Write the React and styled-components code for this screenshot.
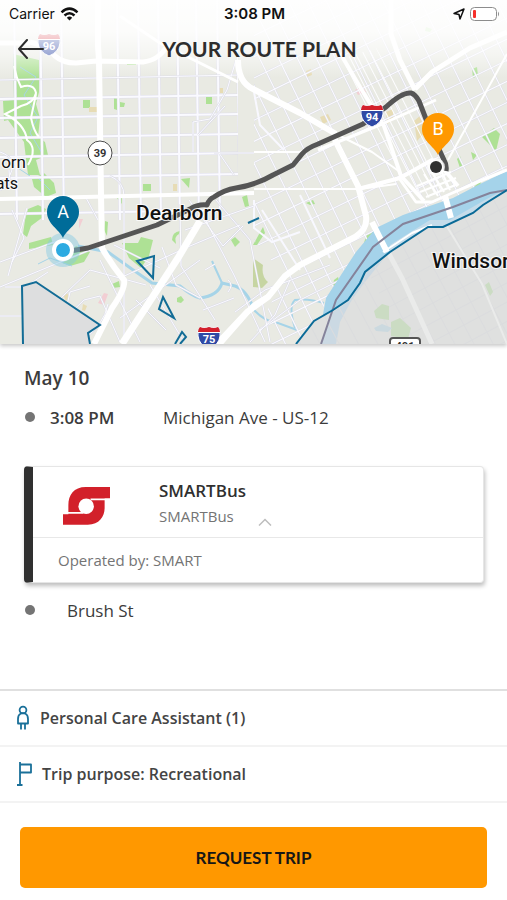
import React from "react";
import styled, { createGlobalStyle } from "styled-components";

const GlobalStyle = createGlobalStyle`
  *, *::before, *::after { box-sizing: border-box; }
  body {
    margin: 0;
    background: #ffffff;
    color: #3c3c3c;
    font-family: "Open Sans", "Noto Sans", sans-serif;
  }
  h1, h2, p, ul, ol { margin: 0; padding: 0; }
`;

const Screen = styled.div`
  display: flex;
  flex-direction: column;
  min-height: 100vh;
`;

const MapPanel = styled.header`
  display: grid;
  height: 344px;
  overflow: hidden;
  box-shadow: 0 2px 4px rgba(0, 0, 0, 0.22);
  > * { grid-area: 1 / 1; min-width: 0; }
`;

const MapDrawing = styled.svg`
  display: block;
  width: 100%;
  height: 344px;
  font-family: Roboto, sans-serif;
`;

const TopBars = styled.div`
  z-index: 1;
  align-self: start;
  height: 78px;
  background: linear-gradient(
    rgba(255, 255, 255, 0.96) 0,
    rgba(255, 255, 255, 0.86) 32px,
    rgba(255, 255, 255, 0.5) 56px,
    rgba(255, 255, 255, 0) 78px
  );
`;

const StatusBar = styled.div`
  display: grid;
  grid-template-columns: 1fr auto 1fr;
  align-items: center;
  height: 28px;
  padding: 0 7px 0 9px;
  color: #111111;
  font: 400 14px/20px Inter, sans-serif;
`;

const StatusSide = styled.div`
  display: flex;
  align-items: center;
  justify-content: ${(p) => (p.$end ? "flex-end" : "flex-start")};
  gap: 5px;
`;

const Clock = styled.span`
  font-size: 15px;
  font-weight: 600;
`;

const TitleBar = styled.div`
  display: grid;
  grid-template-columns: 40px 1fr 40px;
  align-items: center;
  height: 42px;
  padding: 0 6px;
`;

const BackButton = styled.button`
  display: grid;
  place-items: center;
  height: 40px;
  padding: 0 0 0 10px;
  border: 0;
  background: none;
  cursor: pointer;
`;

const Title = styled.h1`
  padding-left: 12px;
  color: #2d2d2d;
  font: 700 21px/28px Lato, sans-serif;
  text-align: center;
`;

const Itinerary = styled.main`
  flex: 1;
  padding: 20px 23px 24px 24px;
`;

const DateHeading = styled.h2`
  font-size: 19px;
  font-weight: 600;
  line-height: 28px;
`;

const Stop = styled.div`
  display: flex;
  align-items: center;
  height: 30px;
  font-size: 17px;
  margin-top: ${(p) => (p.$first ? 10 : 12)}px;
`;

const Dot = styled.span`
  width: 10px;
  height: 10px;
  margin-left: 1px;
  border-radius: 50%;
  background: #747474;
`;

const StopTime = styled.time`
  width: 113px;
  margin-left: 15px;
  font-weight: 600;
`;

const StopName = styled.span`
  margin-left: ${(p) => (p.$indent ? 32 : 0)}px;
`;

const LegCard = styled.section`
  margin-top: 34px;
  border: 1px solid #e6e6e6;
  border-left: 9px solid #303030;
  border-radius: 4px;
  background: #ffffff;
  box-shadow: 1px 3px 4px rgba(0, 0, 0, 0.25);
`;

const LegMain = styled.div`
  display: grid;
  grid-template-columns: 126px auto 1fr;
  height: 71px;
  padding-top: 10px;
  border-bottom: 1px solid #e8e8e8;
`;

const LegLogo = styled.div`
  padding: 10px 0 0 30px;
`;

const LegName = styled.p`
  color: #303030;
  font-size: 17px;
  font-weight: 600;
  line-height: 28px;
`;

const LegService = styled.p`
  color: #747474;
  font-size: 15px;
  font-weight: 500;
  line-height: 22px;
`;

const Collapse = styled.button`
  display: grid;
  place-items: center;
  align-self: end;
  width: 24px;
  height: 24px;
  margin: 0 0 3px 7px;
  padding: 0;
  border: 0;
  background: none;
  cursor: pointer;
`;

const LegOperator = styled.p`
  padding-left: 25px;
  color: #747474;
  font-size: 15px;
  font-weight: 500;
  line-height: 44px;
`;

const Options = styled.ul`
  border-top: 2px solid #e0e0e0;
  list-style: none;
`;

const Option = styled.li`
  display: flex;
  align-items: center;
  gap: 10px;
  height: 56px;
  padding: 0 16px;
  border-bottom: 2px solid #f3f3f3;
  color: #444444;
  font-size: 16px;
  font-weight: 600;
`;

const Actions = styled.footer`
  padding: 24px 20px 12px;
`;

const RequestButton = styled.button`
  width: 100%;
  height: 61px;
  border: 0;
  border-radius: 5px;
  background: #ff9800;
  color: #161616;
  font: 700 17px/24px Lato, sans-serif;
  cursor: pointer;
`;

/* ---------- map data ---------- */

const parks = [
  "M13 54 L39 60 L39 92 L36 104 L40 118 L38 137 L45 142 L48 155 L36 160 L40 175 L28 175 L24 142 L8 120 L4 121 L3 101 L14 100 Z",
  "M83 100h7v8h-7z", "M114 98l6 1 0 3 5 1-1 4-5 0-2 3-3-1z", "M206 96h6v8h-6z",
  "M127 62h9v3h-9z", "M32 179l12-6 10 10 2 10-10 4-12-10z",
  "M28 209l10-4 8 4-3 8-12 9-4 11-4-3 2-14z", "M29 243l22-6 2 8-24 4z",
  "M60 262l16-16 14 6-6 10-14 4z", "M122 243l16 0 3-6 12 3-4 16-8 12-12-10z",
  "M143 184h8v7h-8z", "M181 179l9-1-1 10z", "M115 196l7 0 0 8z",
  "M112 284l7-3 1 6-7 1z", "M177 298l4-2 3 4-3 3-4-1z", "M105 221l3 1-1 14-3-6z",
  "M172 240q0-8 8-9l-1 3q-5 2-3 10z", "M242 197l5-2 2 11-4 1z",
  "M231 240l4-3 5 5-5 5z", "M253 245l10-18 2 6-8 12z",
  "M306 203l7-3 2 4-5 1z", "M366 236l7-5 1 6-7 8-3-2z", "M334 280l4-3 2 7-4 3-3-2z",
  "M470 190l11-9-1 8z", "M482 137l12-9 6 6-4 17z",
  "M457 159l3-3 3 10-3 2z", "M471 152l6 3-4 5z", "M426 27l6 2-2 3-5-1z",
  "M472 69l5-2 1 9-5 2z",
];
const faintParks = [
  "M374 311l8-7 7 2 0 14-13-2z", "M391 322l9-4 11 10-3 11-17-3z", "M485 285l4-3 4 10-3 4z",
];
const ochre = [
  "M89 107h8v5h-8z", "M217 88h6v5h-6z", "M320 117l8-3 3 6-8 4z", "M386 112l7-3 0 11-6 4z",
  "M414 121l7-6 5 16-9 10z", "M306 71l5-2 1 6-5 2z", "M173 184h4v7h-4z", "M63 295l4-2 3 5-4 3z",
  "M83 304l4 2-2 5-3-1z", "M402 262l5-4 3 7-5 3z",
];
const pinks = ["M355 90l7-4 4 6-8 3z", "M98 303l6-10 4 1-4 11z", "M79 219l4 0-4 10z"];

const westVerticals = [14, 40, 61, 117, 138, 158, 177, 196, 217, 237];
const westHorizontals = [98, 117, 137, 156, 177, 213, 232];

const minorRoads = [
  "M0 80L240 75", "M0 287L58 263 90 250", "M0 262L60 240 M5 287L25 287 48 272",
  "M26 342L40 318 90 270 146 285 M0 316H26 M40 342L84 300 100 296 120 342",
  "M59 342L70 292 90 286 M8 276L27 208 M12 210L24 238 12 262",
  "M114 245L160 268 M180 204L181 266 215 320 M120 278L190 246 240 225",
  "M100 260L140 342 M150 285L184 342 M120 318L200 260 M136 300L166 330",
  "M203 215L234 275 265 342 M185 230L254 206 M216 200L250 240 270 342 M189 200l34 46 20-20",
  "M236 60L227 90 210 119 193 122 193 152 M198 135L225 106 M219 153L234 175 M214 153H254",
  "M110 176Q124 182 124 196V342 M85 196L98 220 M162 247L176 285 200 298",
  "M250 342L275 315 290 280 M235 312L265 290 330 265 M260 330L300 300 340 280",
  "M228 292Q234 285 228 280 M203 310L234 298 M205 270L215 264 M80 342Q104 326 108 304",
  "M0 152Q18 158 10 175 M0 190Q12 186 9 170",
];

const parkTrails =
  "M14 66L17 78 21 87Q34 83 36 93Q34 103 21 106L5 114Q25 124 27 140Q38 148 28 165 M36 94L31 118Q34 132 39 137";

const arterials = [
  ["M98 0L98 46 99 60 101 195 102 248Q111 264 124 280Q126 288 112 308L94 344", 6],
  ["M30 42Q48 46 55 56Q63 63 76 63L96 61 143 62Q160 60 168 44", 5],
  ["M0 43H30", 5],
  ["M0 199L254 193", 4],
  ["M254 189L360 189 396 184", 2],
  ["M200 221L178 258 122 344", 7],
  ["M238 60Q238 82 253 89L300 113 336 134", 6],
  ["M336 134L372 152 400 172", 2],
  ["M120 16L160 43 238 82", 3],
  ["M217 344L247 312 268 297 285 276 300 265 355 237Q368 229 366 216L358 186 334 138", 6],
  ["M220 344L254 305 270 295", 5],
  ["M340 53L363 92 384 126 401 176 424 201", 4],
  ["M391 0L391 34 400 60 415 90", 5],
  ["M507 32L470 48 432 72 415 89", 5],
  ["M254 152H300L338 135", 2],
  ["M318 150L382 124 436 100", 3],
  ["M507 54L448 160", 2],
  ["M372 222L387 252", 6],
  ["M445 196L451 218", 6],
  ["M399 178L416 202 432 202 450 194 480 181 507 170", 3],
  ["M358 189L400 178 432 160 446 172 458 186", 4],
];

const cityLines = Array.from({ length: 25 }, (_, i) => -170 + i * 17);
const crossLines = Array.from({ length: 25 }, (_, i) => -215 + i * 19);
const downtownLines = Array.from({ length: 9 }, (_, i) => -26 + i * 7);
const windsorLines = Array.from({ length: 18 }, (_, i) => -170 + i * 17);

const river =
  "M507 171L480 184 453 198 403 215 376 228 356 252 326 298 321 325 313 344H340L346 310 362 285 370 274 396 252 430 227 445 228 475 213 507 194Z";
const canada =
  "M296 344L314 321 333 310 348 300 360 283 365 272 390 252 428 227 443 227 473 213 483 205 507 190V344Z";
const coastLine =
  "M296 344L314 321 333 310 348 300 360 283 365 272 390 252 428 227 443 227 473 213 483 205 507 190";
const borderLine = "M321 344L336 300 373 247 403 224 453 207 490 193 507 190";
const zones = [
  "M23 344L22 286 36 282 100 325 88 333 90 344",
  "M137 261L154 256 153 278Z",
  "M163 297L174 318 159 309Z",
  "M175 344L182 332 186 337 180 344",
  "M248 223L259 218",
];
const tripLine =
  "M70 251L88 248 103 243 157 225 190 209Q198 204 207 205Q209 199 214 197Q224 190 236 188Q256 185 273 175L293 165 302 154Q307 148 318 144L363 124 386 107Q402 92 411 93Q415 94 419 101L431 132 444 160Q447 165 446 171";

function Shield({ x, y, number }) {
  return (
    <g transform={`translate(${x} ${y})`}>
      <path d="M-9 -11Q-5 -9 0 -11Q5 -9 9 -11Q12 -7 11 -2Q10 7 0 11Q-10 7 -11 -2Q-12 -7 -9 -11Z" fill="#2f49a5" stroke="#fff" strokeWidth="1" />
      <path d="M-9 -11Q-5 -9 0 -11Q5 -9 9 -11Q11 -9 11 -6H-11Q-11 -9 -9 -11Z" fill="#d3202b" />
      <path d="M-11 -5.500H11" stroke="#fff" />
      <text y="5" textAnchor="middle" fill="#fff" fontSize="11" fontWeight="700">{number}</text>
    </g>
  );
}

function Pin({ x, y, letter, color }) {
  return (
    <g transform={`translate(${x} ${y})`}>
      <path d="M0 26C-4 17 -16 12 -16 0A16 16 0 0 1 16 0C16 12 4 17 0 26Z" fill={color} />
      <text y="6" textAnchor="middle" fill="#fff" fontSize="18">{letter}</text>
    </g>
  );
}

function RouteMap() {
  return (
    <MapDrawing viewBox="0 0 507 344" preserveAspectRatio="xMidYMid slice" role="img" aria-label="Route from Dearborn to downtown Detroit">
      <defs>
        <clipPath id="west"><path d="M0 0H238V200L200 220H0Z" /></clipPath>
        <clipPath id="city"><path d="M254 0H507V171L453 198 403 215 376 228 356 252 326 298 313 344H250L285 276 254 240Z" /></clipPath>
        <clipPath id="downtown"><path d="M338 60L376 48 455 180 450 186 425 200 402 178Z" /></clipPath>
        <clipPath id="windsor"><path d={canada} /></clipPath>
      </defs>
      <rect width="507" height="344" fill="#e9eae3" />
      <g fill="#aee195">{parks.map((d) => <path key={d} d={d} />)}</g>
      <path d="M253 258L263 265Q261 276 268 282L262 288 253 287Z" fill="#c6d5a2" />
      <g fill="#e7dcb5">{ochre.map((d) => <path key={d} d={d} />)}</g>
      <g fill="#f2ced3">{pinks.map((d) => <path key={d} d={d} />)}</g>

      <g fill="none" stroke="#a6d4e8" strokeWidth="2">
        <path d="M78 246L108 252Q130 268 152 283L180 286Q192 296 200 298Q218 296 222 283L235 286Q247 290 254 310" strokeWidth="3" />
        <path d="M222 283L212 261 M254 310Q265 322 278 323L297 330 M295 328Q288 306 295 300Q308 298 324 303" />
        <path d="M20 67l16 10-12 18 14 22-8 16 12 20 M2 156l16 12 12 8 M36 176l14 14 M38 264L50 258 72 266" strokeWidth="1" />
      </g>

      <g clipPath="url(#west)" fill="none" strokeWidth="3" stroke="#dfdeeb">
        {westVerticals.map((x) => <path key={x} d={`M${x} 0L${x + 3} 220`} />)}
        {westHorizontals.map((y) => <path key={y} d={`M0 ${y + 1}L238 ${y - 3}`} />)}
      </g>
      <g clipPath="url(#west)" fill="none" strokeWidth="2" stroke="#fafaff">
        {westVerticals.map((x) => <path key={x} d={`M${x} 0L${x + 3} 220`} />)}
        {westHorizontals.map((y) => <path key={y} d={`M0 ${y + 1}L238 ${y - 3}`} />)}
      </g>

      <g clipPath="url(#city)">
        <g transform="translate(380 150) rotate(-26)" fill="none">
          <g stroke="#dedee9" strokeWidth="2">
            {crossLines.map((v) => <path key={v} d={`M-260 ${v}H260`} />)}
            {cityLines.map((v) => <path key={v} d={`M${v} -260V260`} />)}
          </g>
          <g stroke="#fcfcff" strokeWidth="1">
            {crossLines.map((v) => <path key={v} d={`M-260 ${v}H260`} />)}
            {cityLines.map((v) => <path key={v} d={`M${v} -260V260`} />)}
          </g>
        </g>
      </g>
      <g clipPath="url(#downtown)">
        <g transform="translate(390 110) rotate(-27)" fill="none" stroke="#fdfdff" strokeWidth="1">
          {downtownLines.map((v) => <path key={v} d={`M${v} -100V140`} />)}
        </g>
      </g>
      <path d="M254 92L260 125 284 150 M254 200V228L272 242 300 232 M262 210L300 270 M300 195L330 258" fill="none" stroke="#f8f8ff" strokeWidth="2" />

      <g fill="none" stroke="#dddde8" strokeWidth="2">{minorRoads.map((d) => <path key={d} d={d} />)}</g>
      <g fill="none" stroke="#fbfbff" strokeWidth="1">{minorRoads.map((d) => <path key={d} d={d} />)}</g>
      <path d={parkTrails} fill="none" stroke="#fff" strokeWidth="2" />

      <path d={river} fill="#a5d3ea" />
      <path d="M390 245L430 220 450 220 485 200 507 188V196L473 215 443 229 428 229 390 254Z" fill="#c5dcea" />
      <path d={canada} fill="#dfe0df" />
      <path d="M333 312L348 302 361 284 367 272 383 260Q360 287 350 303L340 322 336 344H321Z" fill="#cbd9e3" />
      <g clipPath="url(#windsor)">
        <g transform="translate(440 280) rotate(-28)" stroke="#dbdcde" strokeWidth="1">
          {windsorLines.map((v) => <path key={v} d={`M${v} -160V160M-60 ${v}H160`} />)}
        </g>
        <g fill="#cbdcc3">{faintParks.map((d) => <path key={d} d={d} />)}</g>
        <path d="M388 252L402 278 432 344" fill="none" stroke="#eaebea" strokeWidth="5" />
        <path d="M446 225L482 284 507 344" fill="none" stroke="#eaebea" strokeWidth="2" />
        <path d="M374 328l8-4 10 4-4 4-12-1z" fill="#cbd9df" />
      </g>

      <g fill="none" stroke="#ffffff" strokeLinejoin="round">
        {arterials.map(([d, w]) => <path key={d} d={d} strokeWidth={w} />)}
        <path d="M383 252L412 233 432 225" strokeWidth="2" />
      </g>
      <path d="M424 174l14 22m-6-24l12 20m-4-24l10 22M417 186l34-14m-31 20l36-14m-30 19l32-13" stroke="#fff" strokeWidth="2" fill="none" />

      <path d={borderLine} fill="none" stroke="#85839b" strokeWidth="2" />
      <path d={coastLine} fill="none" stroke="#0a6a97" strokeWidth="2" />
      <path d={`${zones[0]}Z`} fill="#dddedf" />
      <g fill="none" stroke="#126c96" strokeWidth="2">{zones.map((d) => <path key={d} d={d} />)}</g>

      <path d={tripLine} fill="none" stroke="#555555" strokeWidth="5" strokeLinejoin="round" />
      <Shield x={49} y={45} number="96" />
      <Shield x={372} y={116} number="94" />
      <Shield x={209} y={338} number="75" />
      <circle cx="100" cy="153" r="12" fill="#fff" stroke="#4a4a4a" />
      <text x="100" y="157" textAnchor="middle" fontSize="11" fontWeight="700" fill="#333">39</text>
      <rect x="390" y="338" width="30" height="14" rx="3" fill="#fff" stroke="#555" strokeWidth="2" />
      <text x="405" y="350" textAnchor="middle" fontSize="11" fontWeight="700" fill="#333">401</text>

      <g fill="#111" stroke="#fff" strokeWidth="2" paintOrder="stroke" strokeOpacity="0.8">
        <text x="136" y="220" fontSize="21" fontWeight="500">Dearborn</text>
        <text x="432" y="268" fontSize="21" fontWeight="500">Windsor</text>
        <text x="26" y="168" fontSize="17" textAnchor="end">orn</text>
        <text x="18" y="189" fontSize="16" textAnchor="end">ats</text>
      </g>

      <circle cx="63" cy="250" r="17" fill="#83c9e2" opacity="0.45" />
      <circle cx="63" cy="250" r="9" fill="#2caae1" stroke="#fff" strokeWidth="4" />
      <Pin x={63} y={212} letter="A" color="#006c99" />
      <circle cx="436" cy="167" r="9" fill="#fff" opacity="0.75" />
      <circle cx="436" cy="167" r="6" fill="#303030" />
      <Pin x={438} y={129} letter="B" color="#ff9800" />
    </MapDrawing>
  );
}

const WifiIcon = () => (
  <svg width="19" height="14" viewBox="0 0 19 14" fill="none" stroke="#111" strokeWidth="2.500" aria-label="Wi-Fi">
    <path d="M1.500 5.300Q9.500 -2 17.500 5.300" />
    <path d="M4.500 8.500Q9.500 4 14.500 8.500" />
    <path d="M6.800 10.700Q9.500 8.300 12.200 10.700L9.500 13.500Z" fill="#111" stroke="none" />
  </svg>
);

const LocationIcon = () => (
  <svg width="12" height="12" viewBox="0 0 12 12" fill="none" stroke="#111" strokeWidth="1.500" strokeLinejoin="round" aria-label="Location">
    <path d="M1 5.500L11 1L7 11L6 6.500Z" />
  </svg>
);

const BatteryIcon = () => (
  <svg width="30" height="14" viewBox="0 0 30 14" fill="none" aria-label="Battery low">
    <rect x="0.500" y="0.500" width="26" height="13" rx="4" fill="#fff" stroke="#8c8c8c" />
    <rect x="3" y="3" width="3" height="8" rx="1" fill="#f5302b" />
    <path d="M28 4.500Q30 7 28 9.500Z" fill="#8c8c8c" />
  </svg>
);

const BackIcon = () => (
  <svg width="28" height="20" viewBox="0 0 28 20" fill="none" stroke="#2d2d2d" strokeWidth="2" strokeLinecap="round" strokeLinejoin="round" aria-hidden="true">
    <path d="M26 10H2M10 1L2 10L10 19" />
  </svg>
);

const SmartLogo = () => (
  <svg width="47" height="38" viewBox="0 0 140 113" role="img" aria-label="SMART">
    <path d="M140 0H68C32 0 16 24 16 54V81H0V112H74C108 112 124 88 124 62V34H140Z" fill="#d2202a" />
    <circle cx="69" cy="57" r="23" fill="#fff" />
    <path d="M0 77H60M82 37H140" stroke="#fff" strokeWidth="5" />
  </svg>
);

const ChevronUp = () => (
  <svg width="14" height="8" viewBox="0 0 14 8" fill="none" stroke="#bdbdbd" strokeWidth="1.500" aria-hidden="true">
    <path d="M1 7.500L7 1.500L13 7.500" />
  </svg>
);

const PersonIcon = () => (
  <svg width="14" height="26" viewBox="0 0 14 26" fill="none" stroke="#1a7099" strokeWidth="1.800" strokeLinejoin="round" aria-hidden="true">
    <circle cx="7" cy="5" r="3.400" />
    <path d="M4.500 8.800Q2 10 2 14V18.500H12V14Q12 10 9.500 8.800Q7 7.600 4.500 8.800M5 18.500V24.500M9 18.500V24.500" />
  </svg>
);

const FlagIcon = () => (
  <svg width="16" height="24" viewBox="0 0 16 24" fill="none" stroke="#1a7099" strokeWidth="1.800" strokeLinejoin="round" aria-hidden="true">
    <path d="M4 0V23M1 23H6.500M4 2.500H15V10.500H4" />
  </svg>
);

export default function App() {
  return (
    <Screen>
      <GlobalStyle />
      <MapPanel>
        <RouteMap />
        <TopBars>
          <StatusBar>
            <StatusSide>Carrier <WifiIcon /></StatusSide>
            <Clock>3:08 PM</Clock>
            <StatusSide $end><LocationIcon /><BatteryIcon /></StatusSide>
          </StatusBar>
          <TitleBar>
            <BackButton type="button" aria-label="Back"><BackIcon /></BackButton>
            <Title>YOUR ROUTE PLAN</Title>
          </TitleBar>
        </TopBars>
      </MapPanel>

      <Itinerary>
        <DateHeading>May 10</DateHeading>
        <Stop $first>
          <Dot />
          <StopTime>3:08 PM</StopTime>
          <StopName>Michigan Ave - US-12</StopName>
        </Stop>
        <LegCard>
          <LegMain>
            <LegLogo><SmartLogo /></LegLogo>
            <div>
              <LegName>SMARTBus</LegName>
              <LegService>SMARTBus</LegService>
            </div>
            <Collapse type="button" aria-label="Collapse leg details"><ChevronUp /></Collapse>
          </LegMain>
          <LegOperator>Operated by: SMART</LegOperator>
        </LegCard>
        <Stop>
          <Dot />
          <StopName $indent>Brush St</StopName>
        </Stop>
      </Itinerary>

      <Options>
        <Option><PersonIcon />Personal Care Assistant (1)</Option>
        <Option><FlagIcon />Trip purpose: Recreational</Option>
      </Options>
      <Actions>
        <RequestButton type="button">REQUEST TRIP</RequestButton>
      </Actions>
    </Screen>
  );
}
